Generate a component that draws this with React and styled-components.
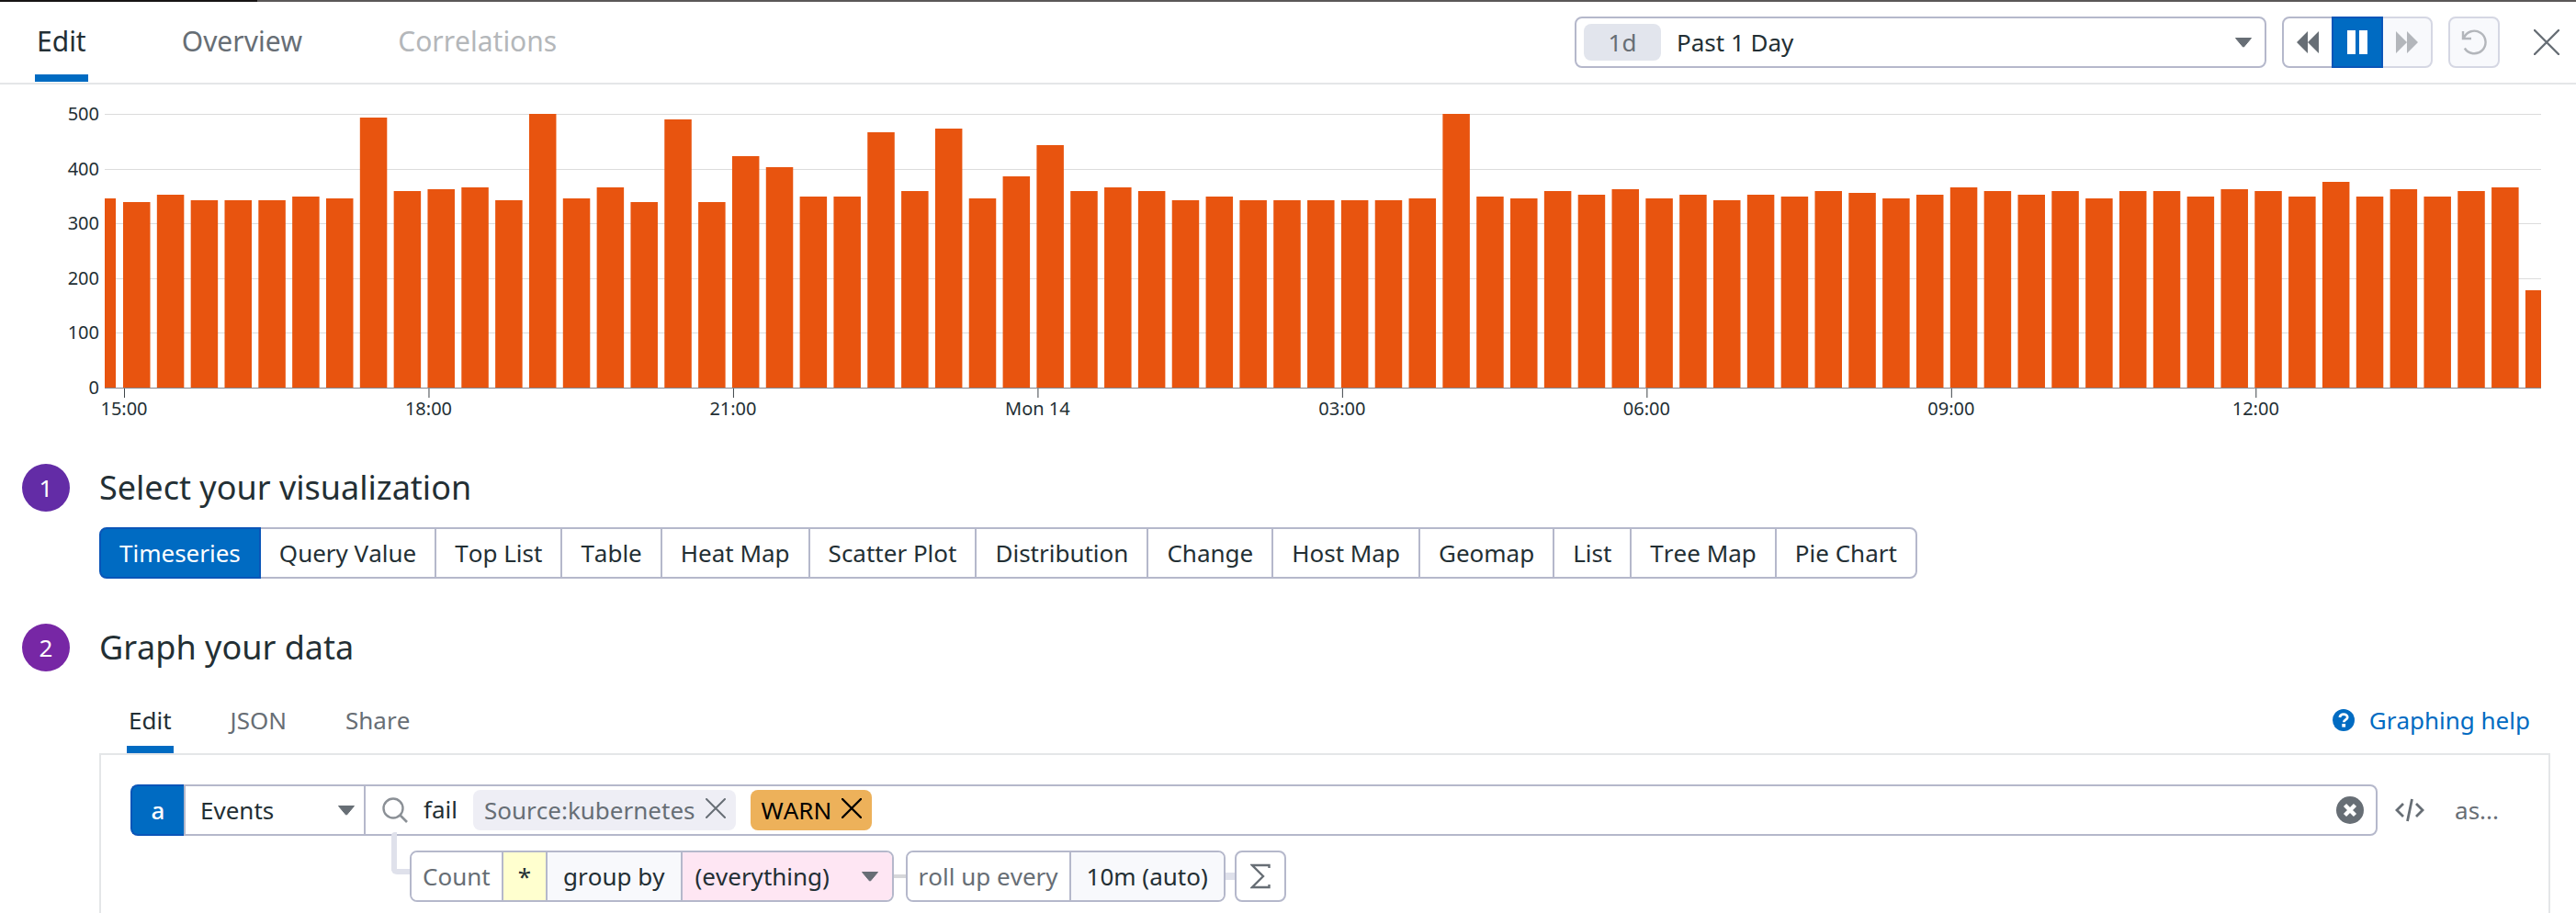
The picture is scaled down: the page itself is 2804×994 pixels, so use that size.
import React from "react";
import styled, { createGlobalStyle, css } from "styled-components";

const color = {
  text: "#232f34",
  muted: "#676e75",
  faint: "#b4b7ba",
  border: "#b5b8cb",
  softBorder: "#d5d7e3",
  rule: "#e4e6e8",
  blue: "#006bc2",
  blueEdge: "#0a55b8",
  shade: "#f8f9fc",
  lilac: "#dfe1eb",
  bar: "#e8540f",
};

const GlobalStyle = createGlobalStyle`
  *, *::before, *::after { box-sizing: border-box; }
  body {
    margin: 0;
    background: #fff;
    color: ${color.text};
    font-family: "Noto Sans", "Open Sans", sans-serif;
    font-size: 26px;
    font-kerning: none;
    line-height: 36px;
  }
  button, input, select { font: inherit; font-kerning: inherit; color: inherit; }
  svg { display: block; flex: none; }
`;

const Page = styled.div`
  display: flex;
  flex-direction: column;
  min-height: 100vh;
`;

const Backdrop = styled.div`
  height: 2px;
  background: linear-gradient(90deg, #171414 280px, #5b5858 280px);
`;

const Header = styled.header`
  display: flex;
  justify-content: space-between;
  height: 90px;
  padding: 0 18px 0 38px;
  border-bottom: 2px solid ${color.rule};
`;

const Tabs = styled.nav`
  display: flex;
  align-items: flex-end;
  gap: ${(p) => (p.$large ? 100 : 60)}px;
  padding-bottom: ${(p) => (p.$large ? 1 : 0)}px;
  font-size: ${(p) => (p.$large ? 30 : 26)}px;
`;

const Tab = styled.button`
  padding: 0 2px ${(p) => (p.$large ? 18 : 10)}px;
  border: 0;
  border-bottom: 8px solid ${(p) => (p.$active ? color.blue : "transparent")};
  background: none;
  color: ${(p) => (p.$active ? color.text : color.muted)};
  &:disabled { color: ${color.faint}; }
`;

const TimeControls = styled.div`
  display: flex;
  align-items: flex-start;
  gap: 17px;
  padding-top: 16px;
`;

const TimeField = styled.label`
  display: flex;
  align-items: center;
  width: 753px;
  height: 56px;
  padding: 0 13px 0 8px;
  border: 2px solid ${color.border};
  border-radius: 8px;
`;

const RangeBadge = styled.span`
  width: 84px;
  height: 40px;
  margin-right: 17px;
  border-radius: 8px;
  background: #e2e5ed;
  color: ${color.muted};
  line-height: 40px;
  text-align: center;
`;

const Select = styled.select`
  flex: 1;
  min-width: 0;
  height: 52px;
  padding: 0;
  border: 0;
  background: none;
  appearance: none;
`;

const Segments = styled.div`
  display: flex;
  width: fit-content;
`;

const Segment = styled.button`
  display: flex;
  align-items: center;
  justify-content: center;
  height: 56px;
  padding: 0 ${(p) => (p.$icon ? 0 : 20)}px;
  ${(p) => p.$icon && css`width: 56px;`}
  border: 2px solid ${color.border};
  background: #fff;
  white-space: nowrap;
  & + & { margin-left: -2px; }
  &:first-child { border-radius: 8px 0 0 8px; }
  &:last-child { border-radius: 0 8px 8px 0; }
  &:only-child { border-radius: 8px; }
  &:disabled {
    border-color: ${color.softBorder};
    background: ${color.shade};
  }
  ${(p) =>
    p.$active &&
    css`
      position: relative;
      border-color: ${color.blueEdge};
      background: ${color.blue};
      color: #fff;
    `}
`;

const PlainButton = styled.button`
  display: flex;
  align-items: center;
  padding: 0;
  border: 0;
  background: none;
  color: ${color.muted};
`;

const CloseButton = styled(PlainButton)`
  height: 56px;
  margin-left: 20px;
`;

const ChartArea = styled.figure`
  height: 373px;
  margin: 0 38px 0 114px;
`;

const Chart = styled.svg`
  width: 100%;
  height: 100%;
  overflow: visible;
  text {
    fill: ${color.text};
    font-size: 20px;
  }
`;

const Section = styled.section`
  display: grid;
  grid-template-columns: 52px minmax(0, 1fr);
  column-gap: 32px;
  align-items: center;
  margin-top: ${(p) => p.$gap}px;
  padding: 0 28px 0 24px;
`;

const StepNumber = styled.span`
  height: 52px;
  border-radius: 50%;
  background: ${(p) => p.$tone};
  color: #fff;
  line-height: 52px;
  text-align: center;
`;

const StepTitle = styled.h2`
  margin: 0;
  font-size: 36px;
  font-weight: 400;
  line-height: 52px;
`;

const StepBody = styled.div`
  grid-column: 2;
  margin-top: ${(p) => p.$gap}px;
`;

const TabBar = styled.div`
  display: flex;
  justify-content: space-between;
  padding: 0 22px 0 30px;
`;

const HelpLink = styled.a`
  display: flex;
  align-items: center;
  gap: 16px;
  height: 36px;
  color: ${color.blue};
  text-decoration: none;
`;

const Panel = styled.div`
  min-height: 174px;
  padding: 32px 54px 12px 32px;
  border: 2px solid ${color.rule};
  border-bottom: 0;
`;

const QueryRow = styled.div`
  display: flex;
  align-items: center;
`;

const QueryName = styled.span`
  width: 58px;
  height: 56px;
  border: 2px solid ${color.blueEdge};
  border-right: 0;
  border-radius: 8px 0 0 8px;
  background: ${color.blue};
  color: #fff;
  font-weight: 500;
  line-height: 52px;
  text-align: center;
`;

const SourceField = styled.label`
  display: flex;
  align-items: center;
  width: 196px;
  height: 56px;
  padding: 0 9px 0 16px;
  border: 2px solid ${color.border};
  border-right: 0;
`;

const SearchField = styled.div`
  display: flex;
  flex: 1;
  align-items: center;
  min-width: 0;
  height: 56px;
  padding: 0 13px 0 18px;
  border: 2px solid ${color.border};
  border-radius: 0 8px 8px 0;
`;

const SearchInput = styled.input`
  width: 71px;
  height: 44px;
  padding: 0 0 2px 17px;
  border: 0;
  background: none;
`;

const Chip = styled.span`
  display: flex;
  align-items: center;
  gap: 11px;
  height: 44px;
  margin-right: 16px;
  padding: 0 11px 0 12px;
  border-radius: 8px;
  background: ${(p) => (p.$warn ? "#edb15a" : "#eeeef5")};
  color: ${(p) => (p.$warn ? "#000" : color.muted)};
  button { color: inherit; padding-bottom: 4px; }
`;

const ClearButton = styled(PlainButton)`
  margin-left: auto;
`;

const RowActions = styled.div`
  display: flex;
  align-items: center;
  gap: 33px;
  padding-left: 19px;
`;

const FunctionRow = styled.div`
  position: relative;
  display: flex;
  align-items: center;
  margin-top: 16px;
  padding-left: 304px;
  &::before {
    content: "";
    position: absolute;
    left: 284px;
    top: -20px;
    width: 20px;
    height: 46px;
    border: solid ${color.lilac};
    border-width: 0 0 6px 6px;
    border-radius: 4px 0 0 6px;
  }
`;

const Pill = styled.div`
  display: flex;
  height: 56px;
  border: 2px solid ${color.border};
  border-radius: 8px;
  overflow: hidden;
`;

const tones = { plain: "#fff", shade: color.shade, yellow: "#ffffcf", pink: "#fee6f3" };

const pillPart = css`
  display: flex;
  align-items: center;
  height: 52px;
  border: 0;
  background: ${(p) => tones[p.$tone || "plain"]};
  color: ${(p) => (p.$muted ? color.muted : color.text)};
  white-space: nowrap;
`;

const PillPart = styled.button`
  ${pillPart}
  padding: 0 ${(p) => p.$pad}px;
  & + & { border-left: 2px solid ${color.border}; }
`;

const PillSelect = styled.label`
  ${pillPart}
  width: 230px;
  padding: 0 14px;
  border-left: 2px solid ${color.border};
`;

const Link = styled.span`
  width: ${(p) => (p.$thick ? 10 : 13)}px;
  height: ${(p) => (p.$thick ? 8 : 4)}px;
  background: ${(p) => (p.$thick ? color.lilac : "#d6d7da")};
`;

const Caret = () => (
  <svg width="20" height="12" viewBox="0 0 20 12" aria-hidden="true">
    <path d="M1.500 1.500h17L10.500 11h-1z" fill={color.muted} stroke={color.muted} strokeLinejoin="round" />
  </svg>
);

const Cross = ({ size, weight = 2 }) => (
  <svg width={size} height={size} viewBox={`0 0 ${size} ${size}`} aria-hidden="true">
    <path
      d={`M1 1L${size - 1} ${size - 1}M${size - 1} 1L1 ${size - 1}`}
      stroke="currentColor"
      strokeWidth={weight}
      strokeLinecap="round"
    />
  </svg>
);

const Rewind = () => (
  <svg width="24" height="26" viewBox="0 0 24 26" aria-hidden="true">
    <path d="M12 1v24L0 13zM24 1v24L12 13z" fill={color.muted} />
  </svg>
);

const Forward = () => (
  <svg width="24" height="26" viewBox="0 0 24 26" aria-hidden="true">
    <path d="M0 1v24l12-12zM12 1v24l12-12z" fill="#b3b6bb" />
  </svg>
);

const Pause = () => (
  <svg width="24" height="26" viewBox="0 0 24 26" aria-hidden="true">
    <path d="M1 0h9v26h-9zM14 0h9v26h-9z" fill="#fff" />
  </svg>
);

const Reset = () => (
  <svg width="28" height="28" viewBox="0 0 28 28" fill="none" aria-hidden="true">
    <path d="M2 2v8h9M2.800 9.500A12.300 12.300 0 1 1 3.800 20.500" stroke="#b3b6bb" strokeWidth="2.400" />
  </svg>
);

const Magnifier = () => (
  <svg width="28" height="28" viewBox="0 0 28 28" fill="none" aria-hidden="true">
    <circle cx="12" cy="12" r="10.500" stroke="#8b9096" strokeWidth="2.400" />
    <path d="M19.500 19.500L27 27" stroke="#8b9096" strokeWidth="2.600" />
  </svg>
);

const ClearIcon = () => (
  <svg width="30" height="30" viewBox="0 0 30 30" aria-hidden="true">
    <circle cx="15" cy="15" r="15" fill={color.muted} />
    <path d="M9.500 9.500l11 11M20.500 9.500l-11 11" stroke="#fff" strokeWidth="4.400" />
  </svg>
);

const CodeIcon = () => (
  <svg width="32" height="26" viewBox="0 0 32 26" fill="none" aria-hidden="true">
    <path d="M9 6L2 13l7 7M23 6l7 7-7 7M18.500 1l-5 24" stroke={color.muted} strokeWidth="2.800" />
  </svg>
);

const HelpIcon = () => (
  <svg width="24" height="24" viewBox="0 0 24 24" aria-hidden="true">
    <circle cx="12" cy="12" r="12" fill={color.blue} />
    <path d="M7.800 9c.5-2.400 2.100-3.400 4.200-3.400 2.400 0 4.200 1.400 4.200 3.300 0 2.700-3.900 2.700-3.900 5.300" fill="none" stroke="#fff" strokeWidth="2.800" />
    <rect x="10.300" y="16" width="3.800" height="3.600" fill="#fff" />
  </svg>
);

const SigmaIcon = () => (
  <svg width="22" height="28" viewBox="0 0 22 28" fill="none" aria-hidden="true">
    <path d="M20.500 5V2H2l12 12L2 26h18.500v-3" stroke={color.muted} strokeWidth="2.400" />
  </svg>
);

const LEAD_VALUE = 346;
const VALUES = [
  339, 352, 342, 342, 342, 349, 346, 493, 359, 362, 366, 342, 500, 346, 366, 339, 490, 339,
  423, 403, 349, 349, 466, 359, 473, 346, 386, 443, 359, 366, 359, 342, 349, 342, 342, 342,
  342, 342, 346, 500, 349, 346, 359, 352, 362, 346, 352, 342, 352, 349, 359, 356, 346, 352,
  366, 359, 352, 359, 346, 359, 359, 349, 362, 359, 349, 376, 349, 362, 349, 359, 366, 178,
];
const TIMES = ["15:00", "18:00", "21:00", "Mon 14", "03:00", "06:00", "09:00", "12:00"];

/* The horizontal scale is a share of the plot width; the vertical one is in pixels. */
const SPAN = 2652;
const FIRST = 20;
const PITCH = 36.83;
const BAR = 29.5;
const BASE = 330;
const PLOT_HEIGHT = 298;
const pct = (n) => `${(n / SPAN) * 100}%`;
const level = (v) => BASE - Math.round((v * PLOT_HEIGHT) / 500);

const EventChart = () => (
  <ChartArea>
    <Chart role="img" aria-label="Events over the past day">
      {[500, 400, 300, 200, 100].map((v) => (
        <rect key={v} x="0" y={level(v)} width="100%" height="1" fill="#dcdcdc" />
      ))}
      <rect x="0" y={level(LEAD_VALUE)} width={pct(12)} height={BASE - level(LEAD_VALUE)} fill={color.bar} />
      {VALUES.map((v, i) => {
        const x = FIRST + i * PITCH;
        return (
          <rect
            key={i}
            x={pct(x)}
            y={level(v)}
            width={pct(Math.min(BAR, SPAN - x))}
            height={BASE - level(v)}
            fill={color.bar}
          />
        );
      })}
      <rect x="0" y={BASE} width="100%" height="1" fill="#85858d" />
      {[0, 100, 200, 300, 400, 500].map((v) => (
        <text key={v} x="-6" y={level(v) + 7} textAnchor="end">{v}</text>
      ))}
      {TIMES.map((t, i) => {
        const x = pct(FIRST + 1 + i * 9 * PITCH);
        return (
          <g key={t}>
            <rect x={x} y={BASE + 1} width="1" height="10" fill="#3f4549" />
            <text x={x} y={BASE + 30} textAnchor="middle">{t}</text>
          </g>
        );
      })}
    </Chart>
  </ChartArea>
);

const VISUALIZATIONS = [
  "Timeseries", "Query Value", "Top List", "Table", "Heat Map", "Scatter Plot", "Distribution",
  "Change", "Host Map", "Geomap", "List", "Tree Map", "Pie Chart",
];

export default function App() {
  return (
    <>
      <GlobalStyle />
      <Page>
        <Backdrop />
        <Header>
          <Tabs $large>
            <Tab $large $active>Edit</Tab>
            <Tab $large>Overview</Tab>
            <Tab $large disabled>Correlations</Tab>
          </Tabs>
          <TimeControls>
            <TimeField>
              <RangeBadge>1d</RangeBadge>
              <Select aria-label="Time range">
                <option>Past 1 Day</option>
              </Select>
              <Caret />
            </TimeField>
            <Segments>
              <Segment $icon aria-label="Back"><Rewind /></Segment>
              <Segment $icon $active aria-label="Pause"><Pause /></Segment>
              <Segment $icon disabled aria-label="Forward"><Forward /></Segment>
            </Segments>
            <Segments>
              <Segment $icon disabled aria-label="Reset"><Reset /></Segment>
            </Segments>
            <CloseButton aria-label="Close"><Cross size={28} weight={2.4} /></CloseButton>
          </TimeControls>
        </Header>

        <EventChart />

        <Section $gap={40}>
          <StepNumber $tone="#632ca6">1</StepNumber>
          <StepTitle>Select your visualization</StepTitle>
          <StepBody $gap={17}>
            <Segments>
              {VISUALIZATIONS.map((name, i) => (
                <Segment key={name} $active={i === 0}>{name}</Segment>
              ))}
            </Segments>
          </StepBody>
        </Section>

        <Section $gap={49}>
          <StepNumber $tone="#7727a5">2</StepNumber>
          <StepTitle>Graph your data</StepTitle>
          <StepBody $gap={35}>
            <TabBar>
              <Tabs>
                <Tab $active>Edit</Tab>
                <Tab>JSON</Tab>
                <Tab>Share</Tab>
              </Tabs>
              <HelpLink href="#help"><HelpIcon />Graphing help</HelpLink>
            </TabBar>
            <Panel>
              <QueryRow>
                <QueryName>a</QueryName>
                <SourceField>
                  <Select aria-label="Source">
                    <option>Events</option>
                  </Select>
                  <Caret />
                </SourceField>
                <SearchField>
                  <Magnifier />
                  <SearchInput aria-label="Search query" defaultValue="fail" />
                  <Chip>
                    Source:kubernetes
                    <PlainButton aria-label="Remove source"><Cross size={22} /></PlainButton>
                  </Chip>
                  <Chip $warn>
                    WARN
                    <PlainButton aria-label="Remove status"><Cross size={22} weight={2.4} /></PlainButton>
                  </Chip>
                  <ClearButton aria-label="Clear search"><ClearIcon /></ClearButton>
                </SearchField>
                <RowActions>
                  <PlainButton aria-label="Edit as code"><CodeIcon /></PlainButton>
                  <PlainButton>as...</PlainButton>
                </RowActions>
              </QueryRow>
              <FunctionRow>
                <Pill>
                  <PillPart $muted $pad={12}>Count</PillPart>
                  <PillPart $tone="yellow" $pad={16}>*</PillPart>
                  <PillPart $tone="shade" $pad={17}>group by</PillPart>
                  <PillSelect $tone="pink">
                    <Select aria-label="Group by">
                      <option>(everything)</option>
                    </Select>
                    <Caret />
                  </PillSelect>
                </Pill>
                <Link />
                <Pill>
                  <PillPart $muted $pad={12}>roll up every</PillPart>
                  <PillPart $tone="shade" $pad={17}>10m (auto)</PillPart>
                </Pill>
                <Link $thick />
                <Segments>
                  <Segment $icon aria-label="Add function"><SigmaIcon /></Segment>
                </Segments>
              </FunctionRow>
            </Panel>
          </StepBody>
        </Section>
      </Page>
    </>
  );
}
